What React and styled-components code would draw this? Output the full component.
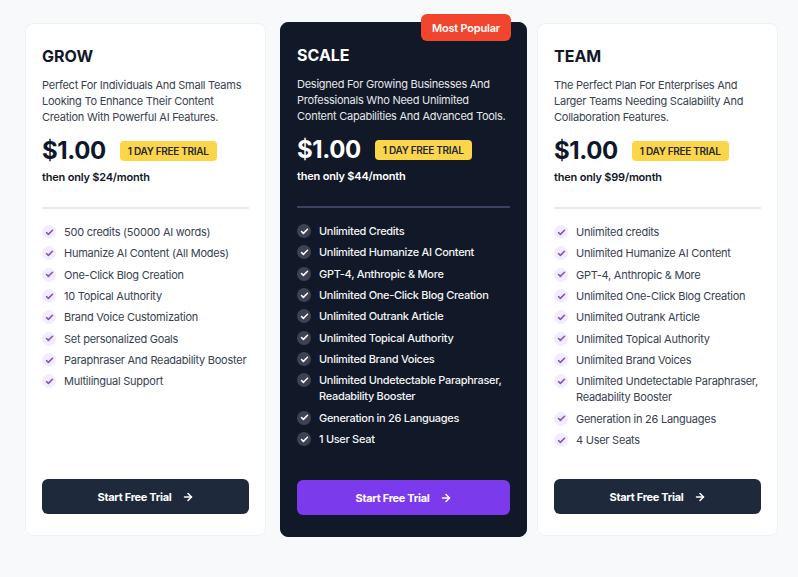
import React from "react";
import styled, { createGlobalStyle, css } from "styled-components";
import { ArrowRight, Check } from "lucide-react";

const Global = createGlobalStyle`
  * { box-sizing: border-box; }
  html, body { margin: 0; padding: 0; background: #f8f9fb; }
  body { font-family: Inter, "Noto Sans", sans-serif; -webkit-font-smoothing: antialiased; }
`;

const Page = styled.div`
  display: flex;
  align-items: stretch;
  padding: 23px 20px 41px 25px;
  min-height: 577px;
`;

const Card = styled.div`
  position: relative;
  display: flex;
  flex-direction: column;
  width: 241px;
  padding: 22px 15px 21px 16px;
  border-radius: 8px;
  background: #ffffff;
  border: 1px solid #f0f1f4;
  ${(p) =>
    p.$dark &&
    css`
      width: 247px;
      margin: -1px 10px -1px 14px;
      background: #111827;
      border-color: #111827;
    `}
`;

const Ribbon = styled.div`
  position: absolute;
  top: -9px;
  right: 15px;
  height: 27px;
  padding: 0 11px;
  display: flex;
  align-items: center;
  border-radius: 6px;
  background: #f1462d;
  color: #fff;
  font-size: 11px;
  font-weight: 600;
  letter-spacing: -0.2px;
`;

const Title = styled.h2`
  margin: 0;
  font-size: 16px;
  line-height: 20px;
  font-weight: 700;
  color: ${(p) => (p.$dark ? "#ffffff" : "#111827")};
`;

const Desc = styled.p`
  margin: 11px 0 0;
  font-size: 11px;
  line-height: 16px;
  letter-spacing: -0.25px;
  color: ${(p) => (p.$dark ? "#e5e7eb" : "#374151")};
  font-weight: 400;
  max-width: ${(p) => (p.$dark ? "212px" : "none")};
`;

const PriceRow = styled.div`
  display: flex;
  align-items: center;
  gap: 14px;
  margin-top: 11px;
  height: 30px;
`;

const Price = styled.span`
  font-size: 24px;
  line-height: 30px;
  font-weight: 700;
  letter-spacing: -0.4px;
  color: ${(p) => (p.$dark ? "#ffffff" : "#0f172a")};
`;

const Trial = styled.span`
  display: inline-flex;
  align-items: center;
  height: 20px;
  padding: 0 8px;
  border-radius: 4px;
  background: #fcd64a;
  color: #1f2937;
  font-size: 10px;
  font-weight: 600;
  letter-spacing: -0.3px;
`;

const Then = styled.div`
  margin-top: 3px;
  font-size: 11px;
  line-height: 16px;
  font-weight: 600;
  letter-spacing: -0.2px;
  color: ${(p) => (p.$dark ? "#ffffff" : "#111827")};
`;

const Divider = styled.hr`
  margin: 22px 1px 0 0;
  border: 0;
  height: 2px;
  background: ${(p) => (p.$dark ? "#3a4462" : "#e8e9ec")};
`;

const List = styled.ul`
  list-style: none;
  margin: 15px 0 0;
  padding: 0;
  display: flex;
  flex-direction: column;
  gap: 5.35px;
`;

const Item = styled.li`
  display: flex;
  align-items: flex-start;
  gap: 8px;
  font-size: 11px;
  line-height: 16px;
  letter-spacing: ${(p) => (p.$dark ? "-0.3px" : "-0.25px")};
  color: ${(p) => (p.$dark ? "#f3f4f6" : "#374151")};
  font-weight: ${(p) => (p.$dark ? 500 : 400)};
`;

const Tick = styled.span`
  flex: none;
  width: 14px;
  height: 14px;
  margin-top: 1px;
  border-radius: 50%;
  display: flex;
  align-items: center;
  justify-content: center;
  background: ${(p) => (p.$dark ? "#3b4352" : "#f3ecfd")};
  color: ${(p) => (p.$dark ? "#ffffff" : "#7c4ddb")};
`;

const Button = styled.button`
  margin-top: auto;
  margin-right: 1px;
  height: 35px;
  border: 0;
  border-radius: 6px;
  display: flex;
  align-items: center;
  justify-content: center;
  gap: 10px;
  font-family: inherit;
  font-size: 11px;
  font-weight: 700;
  letter-spacing: -0.3px;
  color: #fff;
  background: ${(p) => (p.$dark ? "#7c3aed" : "#1e293b")};
  cursor: pointer;
`;

const plans = [
  {
    name: "GROW",
    desc: "Perfect For Individuals And Small Teams Looking To Enhance Their Content Creation With Powerful AI Features.",
    month: "$24",
    features: [
      "500 credits (50000 AI words)",
      "Humanize AI Content (All Modes)",
      "One-Click Blog Creation",
      "10 Topical Authority",
      "Brand Voice Customization",
      "Set personalized Goals",
      "Paraphraser And Readability Booster",
      "Multilingual Support",
    ],
  },
  {
    name: "SCALE",
    dark: true,
    desc: "Designed For Growing Businesses And Professionals Who Need Unlimited Content Capabilities And Advanced Tools.",
    month: "$44",
    features: [
      "Unlimited Credits",
      "Unlimited Humanize AI Content",
      "GPT-4, Anthropic & More",
      "Unlimited One-Click Blog Creation",
      "Unlimited Outrank Article",
      "Unlimited Topical Authority",
      "Unlimited Brand Voices",
      "Unlimited Undetectable Paraphraser, Readability Booster",
      "Generation in 26 Languages",
      "1 User Seat",
    ],
  },
  {
    name: "TEAM",
    desc: "The Perfect Plan For Enterprises And Larger Teams Needing Scalability And Collaboration Features.",
    month: "$99",
    features: [
      "Unlimited credits",
      "Unlimited Humanize AI Content",
      "GPT-4, Anthropic & More",
      "Unlimited One-Click Blog Creation",
      "Unlimited Outrank Article",
      "Unlimited Topical Authority",
      "Unlimited Brand Voices",
      "Unlimited Undetectable Paraphraser, Readability Booster",
      "Generation in 26 Languages",
      "4 User Seats",
    ],
  },
];

export default function App() {
  return (
    <>
      <Global />
      <Page>
        {plans.map((p) => (
          <Card key={p.name} $dark={p.dark}>
            {p.dark && <Ribbon>Most Popular</Ribbon>}
            <Title $dark={p.dark}>{p.name}</Title>
            <Desc $dark={p.dark}>{p.desc}</Desc>
            <PriceRow>
              <Price $dark={p.dark}>$1.00</Price>
              <Trial>1 DAY FREE TRIAL</Trial>
            </PriceRow>
            <Then $dark={p.dark}>then only {p.month}/month</Then>
            <Divider $dark={p.dark} />
            <List>
              {p.features.map((f) => (
                <Item key={f} $dark={p.dark}>
                  <Tick $dark={p.dark}>
                    <Check size={9} strokeWidth={4} />
                  </Tick>
                  <span>{f}</span>
                </Item>
              ))}
            </List>
            <Button $dark={p.dark}>
              Start Free Trial
              <ArrowRight size={12} strokeWidth={3} />
            </Button>
          </Card>
        ))}
      </Page>
    </>
  );
}
